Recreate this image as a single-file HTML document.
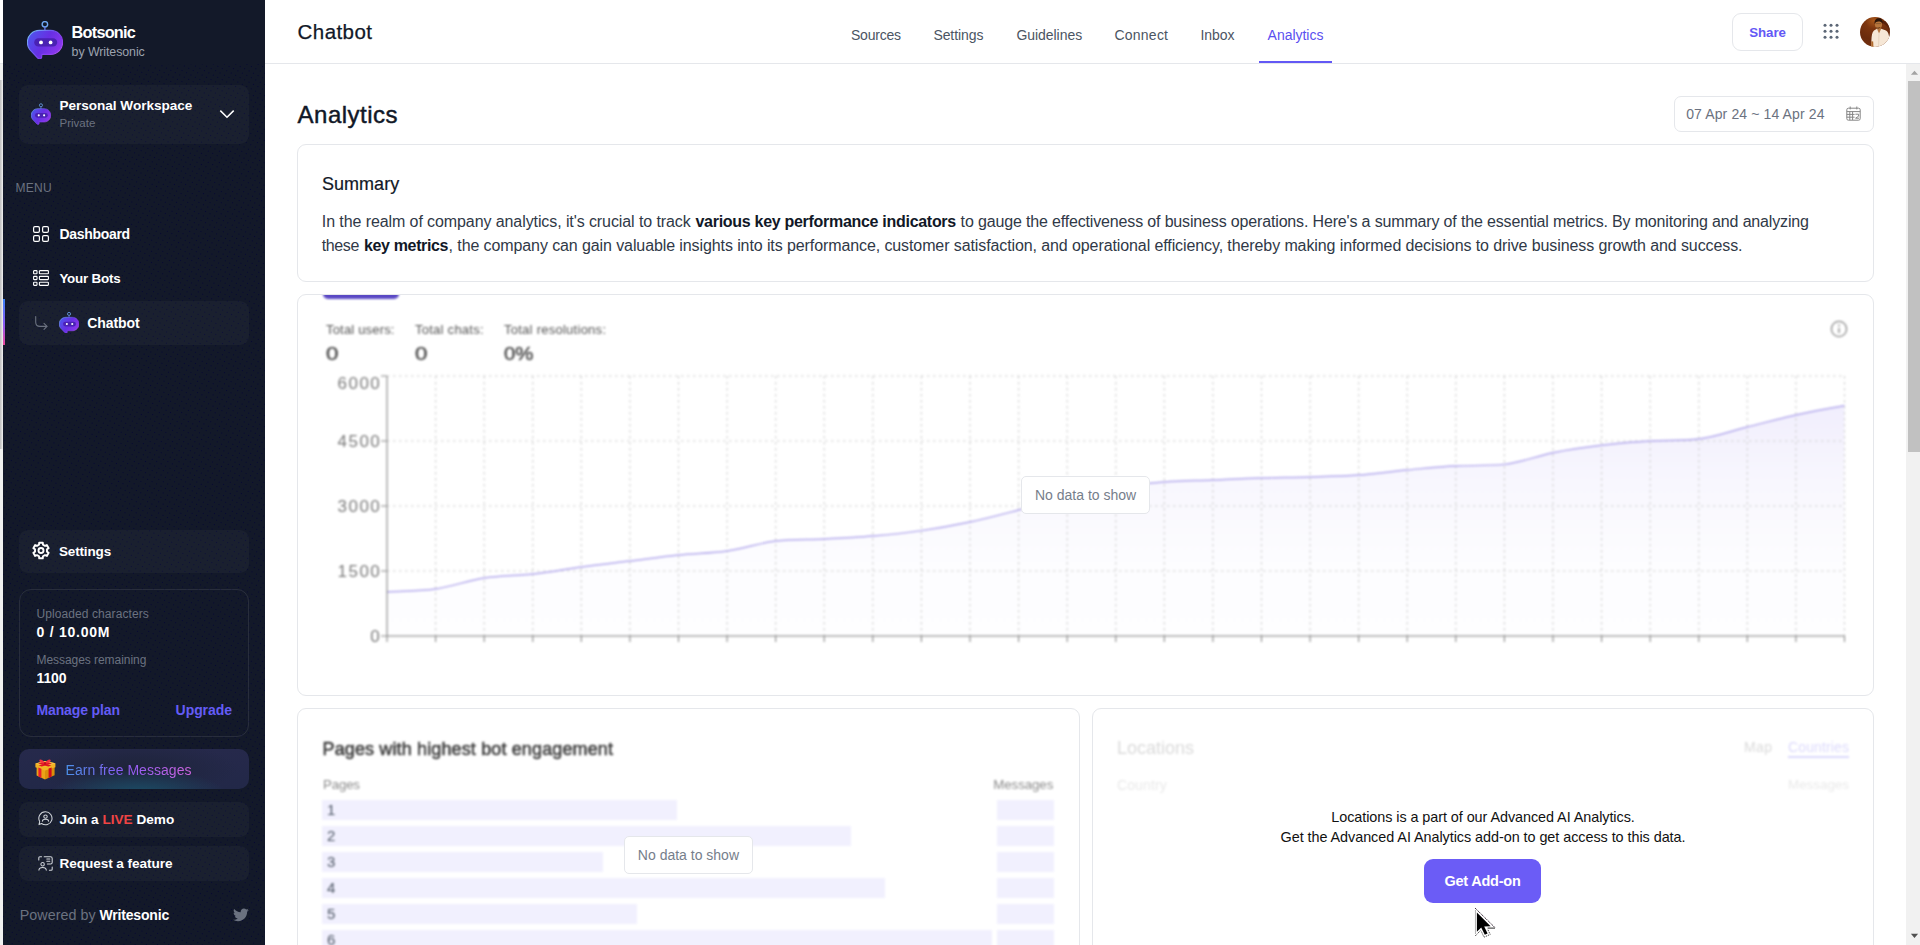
<!DOCTYPE html>
<html>
<head>
<meta charset="utf-8">
<title>Botsonic Analytics</title>
<style>
*{box-sizing:border-box;margin:0;padding:0}
html,body{width:1920px;height:945px;overflow:hidden;background:#fff}
body{font-family:"Liberation Sans",sans-serif;position:relative;color:#111827}
.abs{position:absolute;white-space:nowrap}
/* ---------- left strip ---------- */
#strip{left:0;top:0;width:3px;height:945px;background:#fff}
#strip i{position:absolute;left:0;width:3px;display:block}
/* ---------- sidebar ---------- */
#side{left:3px;top:0;width:262px;height:945px;background-color:#131929;overflow:hidden}
#sidetop{left:0;top:0;width:262px;height:64px;background:#131929}
.sbox{position:absolute;left:16px;width:230px;border-radius:9px;background:rgba(255,255,255,0.032)}
.sw{color:#fff;font-weight:bold;font-size:14px;line-height:16px}
.sg{color:#6b7280;font-size:12px;line-height:14px}
/* ---------- header ---------- */
#hdr{left:265px;top:0;width:1655px;height:64px;background:#fff;border-bottom:1px solid #e5e7eb}
#hdr .tab{position:absolute;top:25.6px;font-size:14px;line-height:18px;color:#4b5563;white-space:nowrap}
/* ---------- main ---------- */
.card{position:absolute;border:1px solid #e5e7eb;border-radius:9px;background:#fff;overflow:hidden}
.nodata{position:absolute;border:1px solid #e5e7eb;border-radius:5px;background:#fff;color:#767e8b;font-size:14px;line-height:36.4px;text-align:center;height:38px}
</style>
</head>
<body>

<!-- LEFT STRIP -->
<div id="strip" class="abs">
 <i style="top:63px;height:1px;background:#e5e7eb"></i>
 <i style="top:64px;height:881px;background:#f1f1f1"></i>
 <i style="top:80px;height:369px;background:linear-gradient(90deg,#bdbdbd,#d9d9d9 60%,#f4f4f4)"></i>
</div>

<!-- SIDEBAR -->
<div id="side" class="abs">
 <svg class="abs" style="left:0;top:0" width="262" height="945"><defs><pattern id="dots" width="5" height="5" patternUnits="userSpaceOnUse" patternTransform="rotate(27)"><rect x="1" y="1" width="1.3" height="1.3" fill="#060832" shape-rendering="crispEdges"/></pattern></defs><rect width="262" height="945" fill="url(#dots)"/></svg>
 <div id="sidetop" class="abs"></div>
 <svg width="0" height="0" style="position:absolute">
  <defs>
   <linearGradient id="bg1" x1="0" y1="0.3" x2="1" y2="0.8"><stop offset="0" stop-color="#5052ec"/><stop offset="0.45" stop-color="#672fe3"/><stop offset="1" stop-color="#9539f0"/></linearGradient>
   <linearGradient id="bg2" x1="0" y1="0.2" x2="1" y2="0.9"><stop offset="0" stop-color="#79b8f8"/><stop offset="0.35" stop-color="#6d5cf0"/><stop offset="0.7" stop-color="#8a3cf0"/><stop offset="1" stop-color="#c86bf7"/></linearGradient>
   <symbol id="bot" viewBox="0 0 36 38">
    <circle cx="17.9" cy="3.3" r="2.75" fill="none" stroke="#6fa8f2" stroke-width="1.4"/>
    <path d="M17.9 5.8V10" stroke="#6a7cf0" stroke-width="1.3"/>
    <path d="M12.5 9.4H23.5C30.4 9.4 35.6 14.6 35.6 21.3C35.6 28 30.4 33.4 23.5 33.4H15.8C15.1 33.4 14.7 33.9 14.7 34.5V35.9C14.7 37.9 12.1 38.5 10.7 37L2.6 28.4C1 26.4 0.4 24 0.4 21.3C0.4 14.6 5.6 9.4 12.5 9.4Z" fill="url(#bg1)" stroke="url(#bg2)" stroke-width="1.1"/>
    <rect x="7.2" y="17.2" width="23" height="8.4" rx="4.2" fill="#4a22b4"/>
    <circle cx="14" cy="21.4" r="1.9" fill="#fff"/><circle cx="23.6" cy="21.4" r="1.9" fill="#fff"/>
   </symbol>
  </defs>
 </svg>
 <!-- logo -->
 <svg class="abs" style="left:24px;top:21px" width="36" height="38"><use href="#bot"/></svg>
 <div id="s1" class="abs" style="left:68.6px;top:24.3px;font-size:16.3px;line-height:16px;font-weight:bold;color:#fff;letter-spacing:-0.780px">Botsonic</div>
 <div id="s2" class="abs" style="left:68.6px;top:46.2px;font-size:12.4px;line-height:13px;color:#9ca3af;letter-spacing:-0.079px">by Writesonic</div>

 <!-- workspace -->
 <div class="sbox" style="top:85px;height:59px"></div>
 <svg class="abs" style="left:28px;top:103px" width="20" height="22"><use href="#bot"/></svg>
 <div id="s3" class="abs sw" style="font-size:13.6px;left:56.5px;top:98.1px;letter-spacing:-0.040px">Personal Workspace</div>
 <div id="s4" class="abs sg" style="left:56.5px;top:116px;font-size:11.5px;letter-spacing:-0.001px">Private</div>
 <svg class="abs" style="left:216px;top:108px" width="16" height="12" viewBox="0 0 16 12"><path d="M1.3 2.6L8 9.2L14.7 2.6" fill="none" stroke="#fff" stroke-width="1.5"/></svg>

 <!-- menu -->
 <div id="s5" class="abs" style="left:12.4px;top:182.2px;font-size:12px;line-height:12px;color:#6b7280;letter-spacing:0.351px">MENU</div>

 <svg class="abs" style="left:30px;top:226px" width="16" height="16" viewBox="0 0 16 16" fill="none" stroke="#fff" stroke-width="1.2"><rect x="0.6" y="0.6" width="5.8" height="5.8" rx="1.3"/><rect x="9.6" y="0.6" width="5.8" height="5.8" rx="1.3"/><rect x="0.6" y="9.6" width="5.8" height="5.8" rx="1.3"/><rect x="9.6" y="9.6" width="5.8" height="5.8" rx="1.3"/></svg>
 <div id="s6" class="abs sw" style="left:56.4px;top:226.3px;letter-spacing:-0.304px">Dashboard</div>

 <svg class="abs" style="left:30px;top:270px" width="16" height="16" viewBox="0 0 16 16" fill="none" stroke="#fff" stroke-width="1.1"><rect x="0.6" y="0.6" width="3.4" height="3.2" rx="0.6"/><rect x="6.4" y="0.6" width="9" height="3.2" rx="0.6"/><rect x="0.6" y="6.4" width="3.4" height="3.2" rx="0.6"/><rect x="6.4" y="6.4" width="9" height="3.2" rx="0.6"/><rect x="0.6" y="12.2" width="3.4" height="3.2" rx="0.6"/><rect x="6.4" y="12.2" width="9" height="3.2" rx="0.6"/></svg>
 <div id="s7" class="abs sw" style="font-size:13.4px;left:56.4px;top:270.6px;letter-spacing:-0.211px">Your Bots</div>

 <!-- active chatbot -->
 <div class="abs" style="left:0;top:299px;width:2px;height:46px;background:linear-gradient(180deg,#3b82f6,#8b5cf6 55%,#ec4899)"></div>
 <div class="sbox" style="top:301px;height:44px"></div>
 <svg class="abs" style="left:31px;top:316px" width="14" height="15" viewBox="0 0 14 15" fill="none" stroke="#6b7280" stroke-width="1.1" stroke-linecap="round" stroke-linejoin="round"><path d="M1.700 0.600V6C1.700 9 3.500 10.400 6 10.400H12.800"/><path d="M10 7.400L13 10.400L10 13.400"/></svg>
 <svg class="abs" style="left:55.7px;top:311.6px" width="20.2" height="21.400"><use href="#bot"/></svg>
 <div id="s8" class="abs sw" style="left:84.3px;top:315.3px;letter-spacing:-0.098px">Chatbot</div>

 <!-- settings -->
 <div class="sbox" style="top:530px;height:43px"></div>
 <svg class="abs" style="left:29.4px;top:541.2px" width="18" height="19" viewBox="0 0 18 19" fill="none" stroke="#fff" stroke-width="1.9" stroke-linejoin="round"><path d="M10.80 1.71 L7.20 1.71 L7.01 3.73 L5.00 4.90 L3.15 4.04 L1.35 7.16 L3.01 8.34 L3.01 10.66 L1.35 11.84 L3.15 14.96 L5.00 14.10 L7.01 15.27 L7.20 17.29 L10.80 17.29 L10.99 15.27 L13.00 14.10 L14.85 14.96 L16.65 11.84 L14.99 10.66 L14.99 8.34 L16.65 7.16 L14.85 4.04 L13.00 4.90 L10.99 3.73Z"/><circle cx="9" cy="9.5" r="2.5"/></svg>
 <div id="s9" class="abs sw" style="font-size:13.5px;left:55.9px;top:543.6px;letter-spacing:-0.137px">Settings</div>

 <!-- usage -->
 <div class="abs" style="left:16px;top:589px;width:230px;height:148px;border:1px solid rgba(255,255,255,0.09);border-radius:12px"></div>
 <div id="s10" class="abs sg" style="left:33.5px;top:607px;letter-spacing:0.087px">Uploaded characters</div>
 <div id="s11" class="abs sw" style="left:33.5px;top:624.3px;letter-spacing:0.759px">0 / 10.00M</div>
 <div id="s12" class="abs sg" style="left:33.5px;top:653.3px;letter-spacing:-0.054px">Messages remaining</div>
 <div id="s13" class="abs sw" style="left:33.5px;top:670.3px;letter-spacing:-0.095px">1100</div>
 <div id="s14" class="abs" style="left:33.5px;top:702.3px;font-size:14px;line-height:16px;font-weight:bold;color:#645cf6;letter-spacing:-0.130px">Manage plan</div>
 <div id="s15" class="abs" style="left:172.6px;top:702.3px;font-size:14px;line-height:16px;font-weight:bold;color:#645cf6;letter-spacing:-0.065px">Upgrade</div>

 <!-- earn -->
 <div class="abs" style="left:16px;top:749px;width:230px;height:40px;border-radius:10px;background:radial-gradient(ellipse 38% 62% at 52% 112%,rgba(27,80,104,0.95),rgba(27,80,104,0) 100%),radial-gradient(ellipse 45% 70% at 50% 50%,rgba(29,35,56,0.9),rgba(29,35,56,0) 100%),linear-gradient(180deg,#26294b,#222848)"></div>
 <svg class="abs" style="left:31.6px;top:758.6px" width="21" height="21" viewBox="0 0 21 21">
  <path d="M1.6 7.2L10 10.6V20.6L1.6 16.4Z" fill="#eaa417"/>
  <path d="M10 10.6L19.6 7.2V16.2L10 20.6Z" fill="#d98f0b"/>
  <path d="M0.4 4.4L10 2L20.4 4.2L20.4 8.2L10 11.6L0.4 8.2Z" fill="#f2b325"/>
  <path d="M0.4 4.4L10 7.4L20.4 4.2L10 2Z" fill="#f7c545"/>
  <path d="M3.4 8.6L6.4 9.8V18.9L3.4 17.4Z" fill="#ea1d2c"/>
  <path d="M13.6 9.6L16.6 8.5V17.6L13.6 19Z" fill="#d00a1c"/>
  <path d="M3 4.6L6.2 3.6L16.4 6.6L13.4 7.6Z" fill="#e01224"/>
  <path d="M17 4.6L13.8 3.6L3.6 6.6L6.6 7.6Z" fill="#e01224"/>
  <path d="M10 4.6C7.5 4.6 4 3.4 4.3 1.3C4.6-0.4 8.8 1.2 10 4.6Z" fill="#f2333f"/>
  <path d="M10 4.6C12.5 4.6 16 3.4 15.7 1.3C15.4-0.4 11.2 1.2 10 4.6Z" fill="#f2333f"/>
  <circle cx="10" cy="4.4" r="1.3" fill="#c40c1c"/>
 </svg>
 <div id="s16" class="abs" style="left:62.5px;top:761.5px;font-size:14px;line-height:16px;background:linear-gradient(90deg,#4a90e8 0%,#8b5cf6 45%,#d065e0 100%);-webkit-background-clip:text;background-clip:text;color:transparent;letter-spacing:0.042px">Earn free Messages</div>

 <!-- join -->
 <div class="sbox" style="top:802px;height:35px"></div>
 <svg class="abs" style="left:34.6px;top:811.4px" width="15" height="15" viewBox="0 0 15 15" fill="none" stroke="#d1d5db" stroke-width="1.05" stroke-linecap="round" stroke-linejoin="round"><path d="M7.5 0.8A6.5 6.5 0 1 1 3.6 12.5L1 13.6L1.7 10.5A6.5 6.5 0 0 1 7.5 0.8Z"/><circle cx="7.5" cy="5.6" r="1.7"/><path d="M4.4 10.2C4.6 8.7 5.9 8.3 7.5 8.3C9.100 8.3 10.4 8.7 10.6 10.2"/></svg>
 <div id="s17" class="abs sw" style="font-size:13.6px;left:56.4px;top:811.5px;letter-spacing:-0.002px">Join a <span style="color:#ef4444">LIVE</span> Demo</div>
 <!-- request -->
 <div class="sbox" style="top:846px;height:35px"></div>
 <svg class="abs" style="left:34.8px;top:855.8px" width="15" height="15" viewBox="0 0 15 15" fill="none" stroke="#d1d5db" stroke-width="1.05" stroke-linecap="round" stroke-linejoin="round"><path d="M0.8 4V1.8C0.8 1.2 1.200 0.8 1.800 0.8H3.600"/><path d="M14.2 11V13.2C14.2 13.8 13.8 14.2 13.2 14.2H11.4"/><path d="M6.200 0.8H12.6C13.5 0.8 14.2 1.500 14.2 2.400V6.400C14.2 7.300 13.5 8 12.6 8H9.400"/><path d="M8.800 3H11.8M8.800 5.200H11.8"/><circle cx="4.600" cy="8.200" r="1.700"/><path d="M0.900 14.100C1.100 12.100 2.700 11.400 4.600 11.400C6.500 11.400 8.100 12.100 8.300 14.100"/></svg>
 <div id="s18" class="abs sw" style="font-size:13.6px;left:56.4px;top:855.8px;letter-spacing:-0.055px">Request a feature</div>

 <!-- powered -->
 <div id="s19" class="abs" style="left:16.7px;top:907.2px;font-size:14.3px;line-height:16px;color:#6b7280;letter-spacing:0.054px">Powered by</div>
 <div id="s20" class="abs" style="left:96.5px;top:907.2px;font-size:14px;line-height:16px;color:#fff;font-weight:bold;letter-spacing:-0.180px">Writesonic</div>
 <svg class="abs" style="left:230px;top:908px" width="16" height="14" viewBox="0 0 24 20"><path fill="#6b7280" d="M23.6 2.4c-.9.4-1.8.6-2.8.8 1-.6 1.800-1.600 2.100-2.700-.9.600-2 1-3.100 1.200C18.900.7 17.700.1 16.300.1c-2.700 0-4.800 2.200-4.800 4.800 0 .4 0 .8.1 1.100C7.600 5.800 4.100 3.900 1.700 1C1.300 1.700 1 2.500 1 3.400c0 1.700.9 3.200 2.200 4-.800 0-1.500-.2-2.200-.6v.1c0 2.300 1.700 4.300 3.900 4.700-.4.100-.8.200-1.300.2-.3 0-.6 0-.9-.1.600 1.900 2.400 3.300 4.500 3.400-1.600 1.300-3.700 2.100-6 2.100-.4 0-.8 0-1.100-.1 2.100 1.400 4.700 2.200 7.400 2.200 8.900 0 13.700-7.400 13.700-13.700v-.6c.900-.700 1.700-1.500 2.400-2.600z"/></svg>
 <!--SIDEBAR-END-->
</div>

<!-- HEADER -->
<div id="hdr" class="abs">
 <div class="abs" id="h_title" style="left:32.6px;top:20.6px;font-size:20.5px;line-height:21px;color:#111827;-webkit-text-stroke:0.25px #111827;letter-spacing:0.431px">Chatbot</div>
 <div class="tab" id="t1" style="left:586.0px;letter-spacing:-0.228px">Sources</div>
 <div class="tab" id="t2" style="left:668.4px;letter-spacing:-0.084px">Settings</div>
 <div class="tab" id="t3" style="left:751.4px;letter-spacing:-0.041px">Guidelines</div>
 <div class="tab" id="t4" style="left:849.5px;letter-spacing:0.225px">Connect</div>
 <div class="tab" id="t5" style="left:935.4px;letter-spacing:-0.013px">Inbox</div>
 <div class="tab" id="t6" style="left:1002.6px;color:#5b50f0;letter-spacing:-0.028px">Analytics</div>
 <div class="abs" style="left:994px;top:61px;width:73px;height:2px;background:#6358f5"></div>
 <div class="abs" style="left:1467px;top:13px;width:71px;height:38px;border:1px solid #e5e7eb;border-radius:9px"></div>
 <div class="abs" id="h_share" style="left:1484.2px;top:25.9px;font-size:13.3px;line-height:14px;font-weight:bold;color:#6358f5;letter-spacing:-0.043px">Share</div>
 <svg class="abs" style="left:1558px;top:22.600px" width="16" height="16" viewBox="0 0 16 16" fill="#5b6675"><circle cx="2" cy="2.2" r="1.5"/><circle cx="8" cy="2.2" r="1.5"/><circle cx="14" cy="2.2" r="1.5"/><circle cx="2" cy="8.2" r="1.5"/><circle cx="8" cy="8.2" r="1.5"/><circle cx="14" cy="8.2" r="1.5"/><circle cx="2" cy="14.2" r="1.5"/><circle cx="8" cy="14.2" r="1.5"/><circle cx="14" cy="14.2" r="1.5"/></svg>
 <svg class="abs" style="left:1595px;top:17px" width="30" height="30" viewBox="0 0 30 30">
  <defs><clipPath id="avc"><circle cx="15" cy="15" r="15"/></clipPath>
  <radialGradient id="avg" cx="0.45" cy="0.12" r="0.9"><stop offset="0" stop-color="#a8571b"/><stop offset="0.3" stop-color="#7c350f"/><stop offset="0.7" stop-color="#6a2b0d"/><stop offset="1" stop-color="#74310f"/></radialGradient></defs>
  <g clip-path="url(#avc)">
   <rect width="30" height="30" fill="url(#avg)"/>
   <path d="M21 6C24 6 28 9 30 14V4H20Z" fill="#5a220b"/>
   <path d="M11.2 30L11.4 23.500C11.500 19 12.200 15.200 14 13.600L17 11.800H21.200L26 13.400C28.200 14.600 29.200 18 29.300 22L28 27L24 30Z" fill="#f6e7d6"/>
   <path d="M17 11.800L19 16.500L21.200 11.800Z" fill="#b87a45"/>
   <path d="M19 16.500L18.600 30" stroke="#e2cdb6" stroke-width="0.800" fill="none"/>
   <path d="M11.300 24.200L13.200 24.600L13.400 30H11.200Z" fill="#b06a2c"/>
   <ellipse cx="18.500" cy="7.500" rx="3.600" ry="4.600" fill="#b9773d"/>
   <path d="M14.600 7C14.200 3.200 16.200 1.200 18.700 1.200C21.400 1.200 23 3 22.400 6.600C21.600 4.900 19.800 4.500 18.300 4.600C16.800 4.700 15.500 5.300 14.600 7Z" fill="#2b1408"/>
   <path d="M15.600 9.800C16.400 12 20.200 12 21 9.600C20.400 11 16.400 11.200 15.600 9.800Z" fill="#3a1c0c"/>
   <path d="M15.400 6.600H21.200" stroke="#6b4a2a" stroke-width="0.600"/>
  </g>
 </svg>
 <!--HEADER-END-->
</div>

<!-- MAIN -->
<!--MAIN-START-->
<div class="abs" id="m_title" style="left:297.6px;top:102.6px;font-size:24px;line-height:24px;color:#111827;-webkit-text-stroke:0.45px #111827;letter-spacing:0.495px">Analytics</div>
<div class="abs" style="left:1674px;top:96px;width:200px;height:36px;border:1px solid #e5e7eb;border-radius:7px"></div>
<div class="abs" id="m_date" style="left:1686.2px;top:106.900px;font-size:14px;line-height:14px;color:#6b7280;letter-spacing:0.123px">07 Apr 24 ~ 14 Apr 24</div>
<svg class="abs" style="left:1846.200px;top:105.800px" width="15" height="15" viewBox="0 0 15 15" fill="none" stroke="#868686" stroke-width="1"><rect x="0.8" y="2.2" width="13.4" height="12" rx="1.6"/><path d="M0.8 5.600H14.200M4.200 0.500V3.400M10.800 0.500V3.400M3.800 5.600V14M6.600 5.600V14M0.800 8.400H8.600M0.800 11.200H8.600M9.400 8.200H12.600V10.200L9.600 12.200H13"/></svg>

<!-- summary card -->
<div class="card" style="left:297px;top:144px;width:1577px;height:138px"></div>
<div class="abs" id="m_sum" style="left:321.9px;top:175.200px;font-size:18px;line-height:18px;color:#111827;-webkit-text-stroke:0.2px #111827;letter-spacing:0.047px">Summary</div>
<div class="abs" id="m_p1a" style="left:321.8px;top:213.500px;font-size:16px;line-height:16px;color:#303947;letter-spacing:-0.089px">In the realm of company analytics, it's crucial to track</div>
<div class="abs" id="m_p1b" style="left:695.5px;top:213.500px;font-size:16px;line-height:16px;color:#111827;font-weight:bold;letter-spacing:-0.292px">various key performance indicators</div>
<div class="abs" id="m_p1c" style="left:960.6px;top:213.500px;font-size:16px;line-height:16px;color:#303947;letter-spacing:-0.157px">to gauge the effectiveness of business operations. Here's a summary of the essential metrics. By monitoring and analyzing</div>
<div class="abs" id="m_p2a" style="left:321.8px;top:237.500px;font-size:16px;line-height:16px;color:#303947;letter-spacing:-0.410px">these</div>
<div class="abs" id="m_p2b" style="left:364.0px;top:237.500px;font-size:16px;line-height:16px;color:#111827;font-weight:bold;letter-spacing:-0.356px">key metrics</div>
<div class="abs" id="m_p2c" style="left:448.6px;top:237.500px;font-size:16px;line-height:16px;color:#303947;letter-spacing:-0.099px">, the company can gain valuable insights into its performance, customer satisfaction, and operational efficiency, thereby making informed decisions to drive business growth and success.</div>

<!-- chart card -->
<div class="card" style="left:297px;top:294px;width:1577px;height:402px">
 <div class="abs" style="left:0;top:0;width:1575px;height:400px;filter:blur(1px)">
  <div class="abs" style="left:24.5px;top:-6px;width:76px;height:10.200px;border-radius:5px;background:#5a48c4"></div>
  <div class="abs" id="c_l1" style="left:28.0px;top:27.500px;font-size:13px;line-height:13px;color:#555;letter-spacing:0.183px">Total users:</div>
  <div class="abs" id="c_l2" style="left:117.0px;top:27.500px;font-size:13px;line-height:13px;color:#555;letter-spacing:0.258px">Total chats:</div>
  <div class="abs" id="c_l3" style="left:206.0px;top:27.500px;font-size:13px;line-height:13px;color:#555;letter-spacing:0.261px">Total resolutions:</div>
  <div class="abs" id="c_v1" style="transform:scaleX(1.2);transform-origin:0 0;left:27.500px;top:48.700px;font-size:18.5px;line-height:19px;font-weight:normal;-webkit-text-stroke:0.55px #555;color:#555">0</div>
  <div class="abs" id="c_v2" style="transform:scaleX(1.2);transform-origin:0 0;left:116.5px;top:48.700px;font-size:18.5px;line-height:19px;font-weight:normal;-webkit-text-stroke:0.55px #555;color:#555">0</div>
  <div class="abs" id="c_v3" style="transform:scaleX(1.1);transform-origin:0 0;left:205.5px;top:48.700px;font-size:18.5px;line-height:19px;font-weight:normal;-webkit-text-stroke:0.55px #555;color:#555">0%</div>
  <svg class="abs" style="left:1531.5px;top:25px" width="18" height="18" viewBox="0 0 18 18"><circle cx="9" cy="9" r="7.600" fill="none" stroke="#8b8b8b" stroke-width="1.3"/><path d="M9 8v5" stroke="#8b8b8b" stroke-width="1.400"/><circle cx="9" cy="5.400" r="0.900" fill="#8b8b8b"/></svg>
  <svg class="abs" style="left:0;top:0" width="1575" height="399" viewBox="0 0 1575 399">
   <defs><linearGradient id="ag" x1="0" y1="0" x2="0" y2="1"><stop offset="0" stop-color="#f1eefd"/><stop offset="0.33" stop-color="#f8f7fe"/><stop offset="0.7" stop-color="#fdfdff"/><stop offset="1" stop-color="#fefeff"/></linearGradient></defs>
   <path d="M89.0 297.0C105.2 296.0 121.4 296.3 137.6 294.0C153.8 291.7 170.0 285.5 186.2 283.0C202.4 280.5 218.6 280.8 234.8 279.0C250.9 277.2 267.1 274.2 283.3 272.0C299.5 269.8 315.7 268.0 331.9 266.0C348.1 264.0 364.3 261.7 380.5 260.0C396.7 258.3 412.9 258.3 429.1 256.0C445.3 253.7 461.5 247.8 477.7 246.0C493.9 244.2 510.1 244.8 526.2 244.0C542.4 243.2 558.6 242.4 574.8 241.0C591.0 239.6 607.2 237.9 623.4 235.6C639.6 233.3 655.8 230.4 672.0 227.0C688.2 223.6 704.4 219.2 720.6 215.0C736.8 210.8 753.0 205.8 769.2 202.0C785.4 198.2 801.6 194.5 817.8 192.0C833.9 189.5 850.1 188.2 866.3 187.0C882.5 185.8 898.7 185.7 914.9 185.0C931.1 184.3 947.3 183.5 963.5 183.0C979.7 182.5 995.9 182.5 1012.1 182.0C1028.3 181.5 1044.5 181.2 1060.7 180.0C1076.9 178.8 1093.1 176.5 1109.2 175.0C1125.4 173.5 1141.6 171.6 1157.8 171.0C1174.0 170.4 1190.2 170.9 1206.4 169.4C1222.6 167.9 1238.8 160.9 1255.0 157.7C1271.2 154.5 1287.4 152.2 1303.6 150.3C1319.8 148.4 1336.0 146.8 1352.2 146.0C1368.4 145.2 1384.6 145.8 1400.8 144.0C1416.9 142.2 1433.1 136.0 1449.3 132.0C1465.5 128.0 1481.7 123.6 1497.9 120.0C1514.1 116.4 1530.3 113.7 1546.5 110.5L1546.5 341L89.0 341Z" fill="url(#ag)"/>
   <g stroke="#cfcfcf" stroke-width="1.1" stroke-dasharray="2.5 3.5" fill="none"><path d="M137.6 81V341"/><path d="M186.2 81V341"/><path d="M234.8 81V341"/><path d="M283.3 81V341"/><path d="M331.9 81V341"/><path d="M380.5 81V341"/><path d="M429.1 81V341"/><path d="M477.7 81V341"/><path d="M526.2 81V341"/><path d="M574.8 81V341"/><path d="M623.4 81V341"/><path d="M672.0 81V341"/><path d="M720.6 81V341"/><path d="M769.2 81V341"/><path d="M817.8 81V341"/><path d="M866.3 81V341"/><path d="M914.9 81V341"/><path d="M963.5 81V341"/><path d="M1012.1 81V341"/><path d="M1060.7 81V341"/><path d="M1109.2 81V341"/><path d="M1157.8 81V341"/><path d="M1206.4 81V341"/><path d="M1255.0 81V341"/><path d="M1303.6 81V341"/><path d="M1352.2 81V341"/><path d="M1400.8 81V341"/><path d="M1449.3 81V341"/><path d="M1497.9 81V341"/><path d="M1546.5 81V341"/><path d="M89.0 81H1546.5"/><path d="M89.0 146H1546.5"/><path d="M89.0 211H1546.5"/><path d="M89.0 276H1546.5"/></g>
   <path d="M89.0 297.0C105.2 296.0 121.4 296.3 137.6 294.0C153.8 291.7 170.0 285.5 186.2 283.0C202.4 280.5 218.6 280.8 234.8 279.0C250.9 277.2 267.1 274.2 283.3 272.0C299.5 269.8 315.7 268.0 331.9 266.0C348.1 264.0 364.3 261.7 380.5 260.0C396.7 258.3 412.9 258.3 429.1 256.0C445.3 253.7 461.5 247.8 477.7 246.0C493.9 244.2 510.1 244.8 526.2 244.0C542.4 243.2 558.6 242.4 574.8 241.0C591.0 239.6 607.2 237.9 623.4 235.6C639.6 233.3 655.8 230.4 672.0 227.0C688.2 223.6 704.4 219.2 720.6 215.0C736.8 210.8 753.0 205.8 769.2 202.0C785.4 198.2 801.6 194.5 817.8 192.0C833.9 189.5 850.1 188.2 866.3 187.0C882.5 185.8 898.7 185.7 914.9 185.0C931.1 184.3 947.3 183.5 963.5 183.0C979.7 182.5 995.9 182.5 1012.1 182.0C1028.3 181.5 1044.5 181.2 1060.7 180.0C1076.9 178.8 1093.1 176.5 1109.2 175.0C1125.4 173.5 1141.6 171.6 1157.8 171.0C1174.0 170.4 1190.2 170.9 1206.4 169.4C1222.6 167.9 1238.8 160.9 1255.0 157.7C1271.2 154.5 1287.4 152.2 1303.6 150.3C1319.8 148.4 1336.0 146.8 1352.2 146.0C1368.4 145.2 1384.6 145.8 1400.8 144.0C1416.9 142.2 1433.1 136.0 1449.3 132.0C1465.5 128.0 1481.7 123.6 1497.9 120.0C1514.1 116.4 1530.3 113.7 1546.5 110.5" fill="none" stroke="#b4aaed" stroke-width="1.45"/>
   <path d="M89.0 81V341H1546.5" fill="none" stroke="#808080" stroke-width="1.05"/>
   <path d="M89.0 341v6M137.6 341v6M186.2 341v6M234.8 341v6M283.3 341v6M331.9 341v6M380.5 341v6M429.1 341v6M477.7 341v6M526.2 341v6M574.8 341v6M623.4 341v6M672.0 341v6M720.6 341v6M769.2 341v6M817.8 341v6M866.3 341v6M914.9 341v6M963.5 341v6M1012.1 341v6M1060.7 341v6M1109.2 341v6M1157.8 341v6M1206.4 341v6M1255.0 341v6M1303.6 341v6M1352.2 341v6M1400.8 341v6M1449.3 341v6M1497.9 341v6M1546.5 341v6M83.0 81h6M83.0 146h6M83.0 211h6M83.0 276h6M83.0 341h6" fill="none" stroke="#8a8a8a" stroke-width="1.1"/>
   <g font-family="Liberation Sans, sans-serif" font-size="17" fill="#7a7a7a" letter-spacing="1.5"><text x="83.30000000000001" y="94.0" text-anchor="end">6000</text><text x="83.30000000000001" y="151.5" text-anchor="end">4500</text><text x="83.30000000000001" y="216.5" text-anchor="end">3000</text><text x="83.30000000000001" y="281.5" text-anchor="end">1500</text><text x="83.30000000000001" y="346.5" text-anchor="end">0</text></g>
  </svg>
 </div>
 <div class="nodata" style="left:723.200px;top:181px;width:128.800px">No data to show</div>
</div>

<!-- pages card -->
<div class="card" style="left:297px;top:708px;width:783px;height:260px">
 <div class="abs" style="left:0;top:0;width:781px;height:258px;filter:blur(1.05px)">
  <div class="abs" id="p_title" style="left:24.5px;top:30.700px;font-size:18px;line-height:18px;font-weight:normal;-webkit-text-stroke:0.55px #3c3c3c;color:#3c3c3c;letter-spacing:0.134px">Pages with highest bot engagement</div>
  <div class="abs" id="p_h1" style="left:25.0px;top:68.500px;font-size:13.3px;line-height:14px;color:#8c8c8c;letter-spacing:-0.176px">Pages</div>
  <div class="abs" id="p_h2" style="left:695.3px;top:68.500px;font-size:13.3px;line-height:14px;color:#8c8c8c;letter-spacing:-0.087px">Messages</div>
  <div class="abs" style="left:24px;top:91px;width:354.7px;height:20px;background:#f1f0fe"></div><div class="abs" style="left:699px;top:91px;width:57px;height:20px;background:#f1f0fe"></div><div class="abs" style="left:29px;top:93px;font-size:15px;line-height:16px;color:#4b5563">1</div><div class="abs" style="left:24px;top:117px;width:529.0px;height:20px;background:#f1f0fe"></div><div class="abs" style="left:699px;top:117px;width:57px;height:20px;background:#f1f0fe"></div><div class="abs" style="left:29px;top:119px;font-size:15px;line-height:16px;color:#4b5563">2</div><div class="abs" style="left:24px;top:143px;width:281.3px;height:20px;background:#f1f0fe"></div><div class="abs" style="left:699px;top:143px;width:57px;height:20px;background:#f1f0fe"></div><div class="abs" style="left:29px;top:145px;font-size:15px;line-height:16px;color:#4b5563">3</div><div class="abs" style="left:24px;top:169px;width:562.6px;height:20px;background:#f1f0fe"></div><div class="abs" style="left:699px;top:169px;width:57px;height:20px;background:#f1f0fe"></div><div class="abs" style="left:29px;top:171px;font-size:15px;line-height:16px;color:#4b5563">4</div><div class="abs" style="left:24px;top:195px;width:314.7px;height:20px;background:#f1f0fe"></div><div class="abs" style="left:699px;top:195px;width:57px;height:20px;background:#f1f0fe"></div><div class="abs" style="left:29px;top:197px;font-size:15px;line-height:16px;color:#4b5563">5</div><div class="abs" style="left:24px;top:221px;width:670.0px;height:20px;background:#f1f0fe"></div><div class="abs" style="left:699px;top:221px;width:57px;height:20px;background:#f1f0fe"></div><div class="abs" style="left:29px;top:223px;font-size:15px;line-height:16px;color:#4b5563">6</div>
 </div>
 <div class="nodata" style="left:326.100px;top:126.800px;width:128.700px">No data to show</div>
</div>

<!-- locations card -->
<div class="card" style="left:1092px;top:708px;width:782px;height:260px">
 <div class="abs" style="left:0;top:0;width:780px;height:258px;filter:blur(1px);opacity:0.22">
  <div class="abs" id="l_title" style="left:24.0px;top:30px;font-size:18px;line-height:18px;color:#555;letter-spacing:-0.008px">Locations</div>
  <div class="abs" id="l_map" style="left:651.0px;top:30.500px;font-size:14px;line-height:14px;color:#555;letter-spacing:0.383px">Map</div>
  <div class="abs" id="l_cnt" style="left:695.0px;top:30.500px;font-size:14px;line-height:14px;color:#5b50f0;letter-spacing:0.135px">Countries</div>
  <div class="abs" style="left:695px;top:46.500px;width:61px;height:2px;background:#5b50f0"></div>
  <div class="abs" id="l_c" style="left:24.0px;top:68.500px;font-size:14px;line-height:14px;color:#999;letter-spacing:0.111px">Country</div>
  <div class="abs" id="l_m" style="left:695.0px;top:68.500px;font-size:13.4px;line-height:14px;color:#999;letter-spacing:-0.004px">Messages</div>
 </div>
 <div class="abs" id="l_t1" style="left:0;width:780px;top:99.900px;text-align:center;font-size:14.4px;line-height:16px;color:#111;letter-spacing:-0.060px">Locations is a part of our Advanced AI Analytics.</div>
 <div class="abs" id="l_t2" style="left:0;width:780px;top:119.900px;text-align:center;font-size:14.4px;line-height:16px;color:#111;letter-spacing:-0.048px">Get the Advanced AI Analytics add-on to get access to this data.</div>
 <div class="abs" style="left:331px;top:150px;width:117px;height:44px;border-radius:9px;background:#6b5cf6"></div>
 <div class="abs" id="l_btn" style="left:331px;width:117px;top:164.500px;text-align:center;font-size:14.5px;line-height:15px;font-weight:bold;color:#fff;letter-spacing:-0.221px">Get Add-on</div>
</div>

<!-- cursor -->
<svg class="abs" style="left:1474px;top:907px" width="24" height="34" viewBox="0 0 24 34"><path d="M1.200 1.300L1.200 28.700L6.700 23.200L10 30.200L16 27.200L13 21L20.800 20.600Z" fill="#fff"/><path d="M1.500 3V27" stroke="#b5b5b5" stroke-width="1.100"/><path d="M1 1L21.200 20.800" stroke="#1a0a1a" stroke-width="0.900" stroke-dasharray="1.300 0.700"/><path d="M21 21.100H13.600" stroke="#111" stroke-width="0.900"/><path d="M1.200 29L6.600 23.400M7.400 24.600L10 30.200L16.200 27.400L13.600 22" fill="none" stroke="#111" stroke-width="0.800" stroke-dasharray="1.200 0.900"/><path d="M2.900 5.600L2.900 24.800L7.200 20.600L10.800 27.800L13.600 26.400L10.200 19.400L16.600 19.200Z" fill="#000"/></svg>
<!--MAIN-END-->

<!-- SCROLLBAR -->
<div class="abs" style="left:1906px;top:64px;width:14px;height:881px;background:#f1f1f1"></div>
<div class="abs" style="left:1908px;top:81px;width:12px;height:371px;background:#c1c1c1"></div>
<svg class="abs" style="left:1906px;top:64px" width="14" height="17"><path d="M4.900 10.800 L8.500 6.700 L12.100 10.800 Z" fill="#a3a3a3"/></svg>
<svg class="abs" style="left:1906px;top:928px" width="14" height="17"><path d="M4.900 5.800 L8.500 9.900 L12.100 5.800 Z" fill="#505050"/></svg>

</body>
</html>
